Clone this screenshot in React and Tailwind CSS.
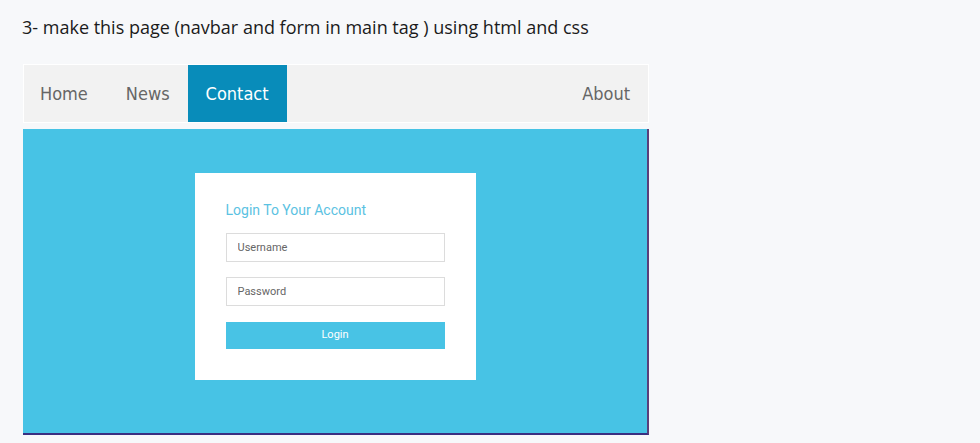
import React from "react"

export default function App() {
  return (
    <div className="w-[980px] h-[443px] bg-[#f7f8fa] overflow-hidden" style={{ fontFamily: '"Open Sans", "Noto Sans", sans-serif' }}>
      <div className="pl-[22px] pt-[14px]">
        <p className="text-[18px] text-[#1b1b1b] leading-[26px]">
          3- make this page (navbar and form in main tag ) using html and css
        </p>

        {/* picture of the page */}
        <div className="mt-[24px] ml-[1px] w-[626px]">
          <nav className="h-[59px] bg-[#f2f2f2] border border-white flex items-stretch text-[18px] text-[#666]" style={{ fontFamily: '"DejaVu Sans Condensed", "Liberation Sans", sans-serif' }}>
            <a className="pl-[16px] pr-[19px] flex items-center">Home</a>
            <a className="pl-[19px] pr-[18px] flex items-center">News</a>
            <a className="px-[18px] flex items-center bg-[#088cba] text-white">Contact</a>
            <a className="ml-auto pr-[18px] flex items-center">About</a>
          </nav>

          <main className="mt-[6px] h-[306px] bg-[#47c3e5] border-r-2 border-b-2 border-r-[#5a3f7a] border-b-[#3a2f80] flex justify-center pt-[44px]">
            <div className="w-[281px] h-[207px] bg-white px-[31px] pt-[28px]" style={{ fontFamily: 'Roboto, sans-serif' }}>
              <h2 className="text-[14px] text-[#5bc2e2] leading-[18px]">Login To Your Account</h2>
              <input
                placeholder="Username"
                className="mt-[14px] w-[219px] h-[29px] border border-[#dcdcdc] px-[11px] text-[11px] placeholder:text-[#666] outline-none"
              />
              <input
                type="password"
                placeholder="Password"
                className="mt-[15px] w-[219px] h-[29px] border border-[#dcdcdc] px-[11px] text-[11px] placeholder:text-[#666] outline-none"
              />
              <button className="mt-[16px] w-[219px] h-[27px] bg-[#48c3e5] text-white text-[11px]">
                Login
              </button>
            </div>
          </main>
        </div>
      </div>
    </div>
  )
}
